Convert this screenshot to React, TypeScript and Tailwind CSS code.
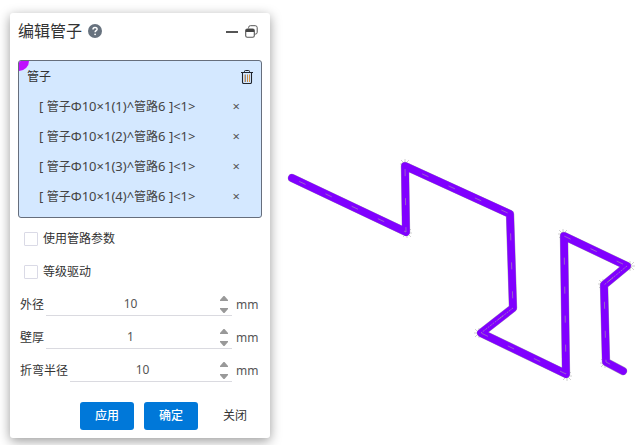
import { useState } from 'react';

const TUBES = [1, 2, 3, 4];

function HelpIcon() {
  return (
    <svg viewBox="0 0 14 14" className="h-3.5 w-3.5" aria-hidden="true">
      <circle cx="7" cy="7" r="7" fill="#67727e" />
      <path d="M5 5.4c0-2.5 4.1-2.4 4.1-.2 0 1.5-2 1.5-2 3" fill="none" stroke="#fff" strokeWidth="1.5" />
      <circle cx="7.1" cy="10.3" r="0.9" fill="#fff" />
    </svg>
  );
}

function RestoreIcon() {
  return (
    <svg viewBox="0 0 13 13" className="h-[13px] w-[13px]" fill="none" stroke="#555" aria-hidden="true">
      <path d="M3.6 3.4V2.6Q3.6.7 5.4.7h4.8q2 0 2 1.9v4.6q0 1.9-1.8 1.9h-.6" strokeWidth="1" />
      <rect x="0.7" y="4" width="8.6" height="8.3" rx="1.6" strokeWidth="1.1" />
      <path d="M.8 7V5.4Q.8 4 2.2 4h5.6q1.4 0 1.4 1.4V7z" fill="#444" stroke="none" />
    </svg>
  );
}

function TrashIcon() {
  return (
    <svg viewBox="0 0 12 14" className="h-3.5 w-3" fill="none" stroke="#20242c" aria-hidden="true">
      <path d="M0 2.5h12M3.5 2.5V1.4q0-.9.9-.9h3.2q.9 0 .9.9v1.1" strokeWidth="1" />
      <path d="M1.5 2.5v9.7q0 1.3 1.3 1.3h6.4q1.3 0 1.3-1.3V2.5" strokeWidth="1.1" />
      <path d="M3.5 4.5v7.5" stroke="#e2b88c" />
      <path d="M4.5 4.5v7.5" stroke="#6c7688" strokeWidth="0.8" />
      <path d="M6.5 4.5v7.5" stroke="#c98a45" />
      <path d="M8.5 4.5v7.5" stroke="#dc9640" />
    </svg>
  );
}

function CheckRow({ label }: { label: string }) {
  return (
    <label className="flex h-[33px] items-center gap-[5px] pl-1.5">
      <input type="checkbox" className="h-3.5 w-3.5 appearance-none rounded-[1px] border border-[#dadae6] bg-white checked:bg-[#0078d9]" />
      {label}
    </label>
  );
}

function NumberRow({ id, label, initial }: { id: string; label: string; initial: number }) {
  const [value, setValue] = useState(String(initial));
  const step = (delta: number) => setValue(String(Number(value) + delta));
  return (
    <div className="flex h-[33px] items-center pl-0.5">
      <label htmlFor={id} className="mr-0.5 shrink-0">{label}</label>
      <div className="mr-1 flex h-[23px] min-w-0 flex-1 border-b border-[#dadae0]">
        <input
          id={id}
          value={value}
          onChange={(e) => setValue(e.target.value)}
          className="min-w-0 flex-1 bg-transparent text-center text-[#555] outline-none"
        />
        <div className="flex w-[17px] flex-col items-center justify-center gap-[7px]">
          <button type="button" aria-label={`${label} +`} onClick={() => step(1)}>
            <svg viewBox="0 0 8 5" className="block h-[5px] w-2"><path d="M0 5V4L3.5 0h1L8 4v1z" fill="#999" /></svg>
          </button>
          <button type="button" aria-label={`${label} -`} onClick={() => step(-1)}>
            <svg viewBox="0 0 8 5" className="block h-[5px] w-2"><path d="M0 0h8v1L4.5 5h-1L0 1z" fill="#999" /></svg>
          </button>
        </div>
      </div>
      <span className="w-[26px] text-[#555]">mm</span>
    </div>
  );
}

const RUN = 'M292 178 406 232 405 166 510 214 513 308 481 333 566 374 564 236 627 266 604 285 606 362 623 371';
const JOINTS = [[405, 164], [407, 233], [479, 333], [567, 376], [563, 234], [630, 266], [603, 284], [605, 363]];

function Viewport() {
  return (
    <svg viewBox="270 0 368 445" preserveAspectRatio="xMinYMin meet" className="min-w-0 flex-1 self-start" fill="none" role="img" aria-label="管路">
      {JOINTS.map(([x, y]) => (
        <path
          key={`${x}-${y}`}
          transform={`translate(${x} ${y})`}
          d="M-5 0H5M0-5V5M-4-4 4 4M-4 4 4-4"
          stroke="#d0d0d0"
        />
      ))}
      <path d={RUN} stroke="#aaa3b5" strokeWidth="8.4" strokeLinecap="round" strokeLinejoin="round" />
      <path d={RUN} stroke="#8000ff" strokeWidth="7.6" strokeLinecap="round" strokeLinejoin="round" />
      <path d={RUN} stroke="#a58bb5" strokeWidth="0.7" strokeDasharray="7 22" strokeDashoffset="-8" />
      <path d="M513 308 481 333M627 266 604 285" stroke="#a58bb5" strokeWidth="0.8" strokeDasharray="2 1" />
    </svg>
  );
}

export default function App() {
  return (
    <main className="flex min-h-screen items-start overflow-hidden bg-white font-['Noto_Sans','Noto_Sans_CJK_SC',sans-serif] text-xs text-[#333]">
      <section className="mt-[13px] mb-[7px] ml-2.5 w-[260px] shrink-0 rounded-[3px] bg-white px-2 pb-2 shadow-[0_3px_12px_rgba(0,0,0,0.4)]">
        <header className="flex h-9 items-center">
          <h1 className="text-base leading-6">编辑管子</h1>
          <button type="button" aria-label="帮助" className="ml-1.5"><HelpIcon /></button>
          <div className="mr-1 ml-auto flex items-center gap-[7px]">
            <button type="button" aria-label="最小化" className="flex h-4 w-3 items-center">
              <span className="mt-0.5 h-0.5 w-full bg-[#555]" />
            </button>
            <button type="button" aria-label="还原"><RestoreIcon /></button>
          </div>
        </header>

        <div className="relative mt-[11px] overflow-hidden rounded-[3px] border border-[#666e7c] bg-[#d4e8ff] pt-px pb-[5px]">
          <span className="absolute top-0 left-0 h-2.5 w-2.5 rounded-br-full bg-[#bf10ff]" />
          <div className="flex h-[30px] items-center justify-between px-2">
            <h2>管子</h2>
            <button type="button" aria-label="删除"><TrashIcon /></button>
          </div>
          <ul>
            {TUBES.map((n) => (
              <li key={n} className="flex h-[30px] items-center justify-between pr-[21px] pl-5 text-[13px] text-[#444]">
                <span>
                  [ <span className="text-xs">管子</span>Φ10×1({n})^<span className="text-xs">管路</span>6 ]&lt;1&gt;
                </span>
                <button type="button" aria-label={`移除 ${n}`} className="text-[#555]">×</button>
              </li>
            ))}
          </ul>
        </div>

        <form className="pt-1" onSubmit={(e) => e.preventDefault()}>
          <CheckRow label="使用管路参数" />
          <CheckRow label="等级驱动" />
          <NumberRow id="outer" label="外径" initial={10} />
          <NumberRow id="wall" label="壁厚" initial={1} />
          <NumberRow id="bend" label="折弯半径" initial={10} />
          <div className="mt-[15px] flex justify-end gap-2.5">
            <button type="button" className="h-7 w-[54px] rounded-[3px] bg-[#0078d9] font-medium text-white">应用</button>
            <button type="submit" className="h-7 w-[54px] rounded-[3px] bg-[#0078d9] font-medium text-white">确定</button>
            <button type="button" className="h-7 w-[54px]">关闭</button>
          </div>
        </form>
      </section>
      <Viewport />
    </main>
  );
}
